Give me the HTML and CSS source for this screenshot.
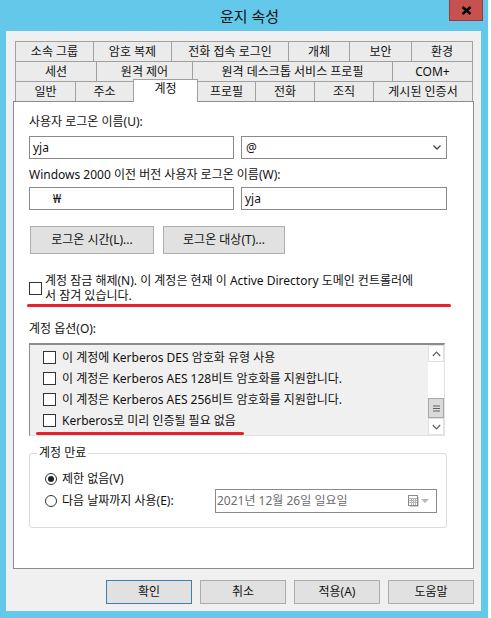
FILE: index.html
```html
<!DOCTYPE html>
<html lang="ko">
<head>
    <meta charset="UTF-8">
    <meta name="viewport" content="width=device-width, initial-scale=1.0">
    <title>윤지 속성</title>
    <link rel="stylesheet" href="styles.css">
</head>
<body>
    <div class="window">
        <div class="titlebar">
            <span class="title">윤지 속성</span>
        </div>
        <button class="close" type="button">
            <svg width="11" height="9" viewBox="0 0 11 9"><path d="M1.5 1 L9.5 8 M9.5 1 L1.5 8" stroke="#000" stroke-width="2.4" fill="none"/></svg>
        </button>

        <div class="client">
            <div class="tabs">
                <div class="tab-row row1">
                    <div class="tab">소속 그룹</div>
                    <div class="tab">암호 복제</div>
                    <div class="tab">전화 접속 로그인</div>
                    <div class="tab">개체</div>
                    <div class="tab">보안</div>
                    <div class="tab">환경</div>
                </div>
                <div class="tab-row row2">
                    <div class="tab">세션</div>
                    <div class="tab">원격 제어</div>
                    <div class="tab">원격 데스크톱 서비스 프로필</div>
                    <div class="tab">COM+</div>
                </div>
                <div class="tab-row row3">
                    <div class="tab">일반</div>
                    <div class="tab">주소</div>
                    <div class="tab active">계정</div>
                    <div class="tab">프로필</div>
                    <div class="tab">전화</div>
                    <div class="tab">조직</div>
                    <div class="tab">게시된 인증서</div>
                </div>
            </div>

            <div class="panel">
                <div class="field-label">사용자 로그온 이름(U):</div>
                <div class="field-row">
                    <div class="textbox left">yja</div>
                    <div class="textbox right combo">
                        <span>@</span>
                        <svg width="8" height="5" viewBox="0 0 8 5"><path d="M0.5 0.5 L4 4 L7.5 0.5" stroke="#444" stroke-width="1.3" fill="none"/></svg>
                    </div>
                </div>

                <div class="field-label second">Windows 2000 이전 버전 사용자 로그온 이름(W):</div>
                <div class="field-row tight">
                    <div class="textbox left domain">₩</div>
                    <div class="textbox right">yja</div>
                </div>

                <div class="action-row">
                    <button class="btn logon-time" type="button">로그온 시간(L)...</button>
                    <button class="btn logon-to" type="button">로그온 대상(T)...</button>
                </div>

                <label class="check unlock">
                    <span class="box"></span>
                    <span class="unlock-text">계정 잠금 해제(N). 이 계정은 현재 이 Active Directory 도메인 컨트롤러에<br>서 잠겨 있습니다.</span>
                </label>
                <div class="mark mark-wide"></div>

                <div class="field-label options">계정 옵션(O):</div>
                <div class="optlist">
                    <div class="opt-items">
                        <div class="opt"><span class="box"></span>이 계정에 Kerberos DES 암호화 유형 사용</div>
                        <div class="opt"><span class="box"></span>이 계정은 Kerberos AES 128비트 암호화를 지원합니다.</div>
                        <div class="opt"><span class="box"></span>이 계정은 Kerberos AES 256비트 암호화를 지원합니다.</div>
                        <div class="opt"><span class="box"></span>Kerberos로 미리 인증될 필요 없음</div>
                    </div>
                    <div class="scrollbar">
                        <div class="sb-btn">
                            <svg width="9" height="6" viewBox="0 0 9 6"><path d="M0.8 5 L4.5 1.2 L8.2 5" stroke="#606060" stroke-width="1.2" fill="none"/></svg>
                        </div>
                        <div class="sb-track"></div>
                        <div class="sb-thumb">
                            <svg width="7" height="7" viewBox="0 0 7 7"><path d="M0 1h7M0 3.5h7M0 6h7" stroke="#606060" stroke-width="1.2"/></svg>
                        </div>
                        <div class="sb-btn">
                            <svg width="9" height="6" viewBox="0 0 9 6"><path d="M0.8 1 L4.5 4.8 L8.2 1" stroke="#606060" stroke-width="1.2" fill="none"/></svg>
                        </div>
                    </div>
                    <div class="mark mark-short"></div>
                </div>

                <fieldset class="expiry">
                    <legend>계정 만료</legend>
                    <div class="radio-row"><span class="radio on"></span>제한 없음(V)</div>
                    <div class="radio-row date-row">
                        <span class="radio"></span>다음 날짜까지 사용(E):
                        <div class="datebox">
                            <span>2021년 12월 26일 일요일</span>
                            <span class="date-icons">
                                <svg width="11" height="12" viewBox="0 0 11 12">
                                    <rect x="0.5" y="0.5" width="9" height="10" fill="#fff" stroke="#8a8a8a"/>
                                    <path d="M1 3.5h8M1 5.5h8M1 7.5h8M3.5 3v7M5.5 3v7M7.5 3v7" stroke="#b4b4b4" stroke-width="1"/>
                                    <path d="M10.5 2v9.5H2" stroke="#d0d0d0" fill="none"/>
                                </svg>
                                <svg width="8" height="4" viewBox="0 0 8 4"><path d="M0 0h8L4 4z" fill="#b8b8b8"/></svg>
                            </span>
                        </div>
                    </div>
                </fieldset>
            </div>

            <div class="dialog-buttons">
                <button class="btn dlg default" type="button">확인</button>
                <button class="btn dlg" type="button">취소</button>
                <button class="btn dlg" type="button">적용(A)</button>
                <button class="btn dlg" type="button">도움말</button>
            </div>
        </div>
    </div>
    <div class="edge"></div>
</body>
</html>
```

FILE: styles.css
```css
* { box-sizing: border-box; }
body { margin: 0; width: 491px; height: 618px; overflow: hidden; display: flex; background: #fff; font-family: "Noto Sans", "Noto Sans CJK KR", sans-serif; font-size: 12px; line-height: 16px; color: #111; }

.window { position: relative; width: 488px; height: 618px; flex: none; background: #63c8e9; padding: 0 7px 7px 6px; display: flex; flex-direction: column; }
.titlebar { height: 31px; flex: none; display: flex; align-items: center; justify-content: center; padding-left: 12px; }
.title { font-size: 15px; line-height: 20px; }
.close { position: absolute; top: 0; right: 5px; width: 34px; height: 21px; padding: 0; background: #c75050; border: 1px solid #9a3b3b; border-top: none; display: flex; align-items: center; justify-content: center; }

.client { flex: 1; background: #f0f0f0; padding: 10px 7px 0 7px; }

.tabs { margin-left: 2px; width: 458px; }
.tab-row { display: grid; height: 20px; }
.row1 { grid-template-columns: 78px 78px 117px 61px 62px 62px; }
.row2 { grid-template-columns: 81px 96px 200px 81px; }
.row3 { grid-template-columns: 60px 58px 64px 58px 59px 59px 100px; }
.tab { border: 1px solid #a0a0a0; border-bottom: none; border-right: none; background: #ebebeb; text-align: center; line-height: 19px; white-space: nowrap; }
.tab:last-child { border-right: 1px solid #a0a0a0; }
.tab.active { position: relative; z-index: 1; background: #fff; margin: -2px -1px -1px 0; border-right: 1px solid #a0a0a0; line-height: 17px; }

.panel { width: 461px; height: 468px; background: #fff; border: 1px solid #8c8c8c; padding: 12px 15px 0 15px; }

.field-label { line-height: 16px; }
.field-label.second { margin-top: 8px; }
.field-label.options { margin-top: 14px; }
.field-row { display: flex; gap: 7px; margin-top: 6px; }
.field-row.tight { margin-top: 4px; }
.textbox { height: 23px; border: 1px solid #8a8a8a; background: #fff; padding: 0 3px; line-height: 21px; }
.textbox.left { width: 205px; }
.textbox.right { width: 206px; }
.textbox.domain { padding-left: 23px; }
.combo { display: flex; align-items: center; justify-content: space-between; padding: 0 5px 0 4px; }

.btn { font: inherit; color: #111; padding: 0; background: #e1e1e1; border: 1px solid #adadad; }
.action-row { display: flex; gap: 9px; margin-top: 16px; }
.action-row .btn { height: 28px; }
.logon-time { width: 124px; margin-left: 1px; }
.logon-to { width: 122px; }

.box { width: 13px; height: 13px; flex: none; border: 1px solid #333; background: #fff; }
.check { display: flex; align-items: center; margin-top: 19px; }
.unlock .box { margin-right: 3px; }
.unlock-text { line-height: 15px; white-space: nowrap; }

.mark { height: 3px; background: #e8202a; border-radius: 2px; }
.mark-wide { width: 424px; margin: 1px 0 0 -2px; }
.mark-short { position: absolute; left: 6px; top: 87px; width: 208px; }

.optlist { position: relative; display: flex; width: 416px; height: 93px; margin-top: 6px; background: #f0f0f0; border-top: 2px solid #8c8c8c; border-left: 1px solid #8c8c8c; border-right: 1px solid #e3e3e3; border-bottom: 1px solid #e3e3e3; }
.opt-items { flex: 1; padding: 2px 0 0 13px; }
.opt { height: 21px; display: flex; align-items: center; white-space: nowrap; }
.opt .box { margin-right: 6px; }

.scrollbar { width: 16px; flex: none; display: flex; flex-direction: column; background: #fff; }
.sb-btn { height: 17px; border: 1px solid #e0e0e0; background: #fff; display: flex; align-items: center; justify-content: center; }
.sb-track { flex: 1; }
.sb-thumb { height: 20px; border: 1px solid #a8a8a8; background: #dadada; display: flex; align-items: center; justify-content: center; }

.expiry { width: 418px; height: 83px; margin: 9px 0 0 0; padding: 10px 9px 0 15px; border: 1px solid #dcdcdc; border-radius: 3px; }
.expiry legend { padding: 0 2px; margin-left: -8px; line-height: 16px; }
.radio-row { display: flex; align-items: center; height: 16px; white-space: nowrap; }
.radio-row.date-row { height: 24px; margin-top: 2px; }
.radio { width: 12px; height: 12px; flex: none; border: 1px solid #333; border-radius: 50%; background: #fff; margin-right: 5px; position: relative; }
.radio.on::after { content: ""; position: absolute; left: 2px; top: 2px; width: 6px; height: 6px; border-radius: 50%; background: #222; }
.datebox { margin-left: auto; width: 222px; height: 24px; border: 1px solid #8a8a8a; background: #fff; color: #6d6d6d; padding: 0 7px 0 1px; display: flex; align-items: center; justify-content: space-between; }
.date-icons { display: flex; align-items: center; gap: 2px; }

.dialog-buttons { display: flex; justify-content: flex-end; gap: 8px; margin-top: 11px; }
.dlg { width: 86px; height: 24px; }
.dlg.default { border-color: #3c7fb1; }

.edge { flex: 1; background: #fff; }
```
